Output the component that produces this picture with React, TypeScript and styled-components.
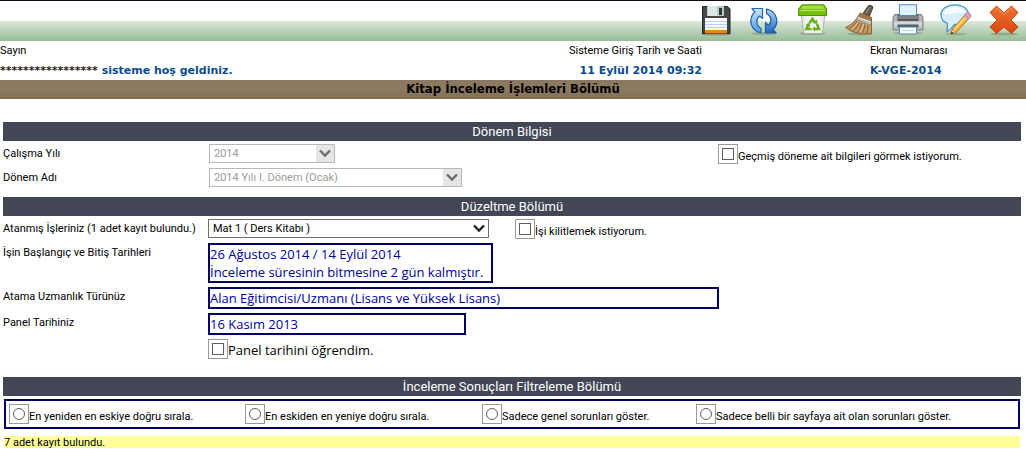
import React from "react";
import styled, { createGlobalStyle, css } from "styled-components";

const GlobalStyle = createGlobalStyle`
  *, *::before { box-sizing: border-box; }
  body {
    margin: 0;
    background: #fff;
    color: #000;
    font-family: Tahoma, Roboto, sans-serif;
    font-size: 11px;
    line-height: 14px;
  }
`;

const Toolbar = styled.nav`
  display: flex;
  justify-content: flex-end;
  gap: 16px;
  height: 41px;
  padding: 3px 6px 0 0;
  border-top: 1px solid #1a0c08;
  background: linear-gradient(#fff 0, #fff 20px, #dbe7db 20px, #97bc97 40px);
`;

const ToolButton = styled.button`
  width: 32px;
  height: 32px;
  padding: 0;
  border: 0;
  background: none;
  cursor: pointer;
  svg { display: block; }
`;

const SessionInfo = styled.header`
  display: grid;
  grid-template-columns: 402fr 300fr 324fr;
  height: 39px;
  padding-top: 3px;
`;

const InfoCell = styled.div<{ $end?: boolean; $indent?: boolean }>`
  display: flex;
  flex-direction: column;
  gap: 6px;
  white-space: nowrap;
  text-align: ${(p) => (p.$end ? "right" : "left")};
  padding-left: ${(p) => (p.$indent ? "168px" : "0")};
`;

const InfoValue = styled.strong`
  font-family: Verdana, "DejaVu Sans", sans-serif;
  color: #0b4c8c;
`;

const Mask = styled.span`
  color: #2a1a10;
`;

const PageTitle = styled.h1`
  margin: 0 0 23px;
  font-family: Tahoma, "DejaVu Sans Condensed", "DejaVu Sans", sans-serif;
  font-stretch: condensed;
  font-size: 13px;
  line-height: 18px;
  padding-bottom: 1px;
  text-align: center;
  background: linear-gradient(#8b7862, #8c7a62 50%, #816e57);
`;

const Section = styled.section<{ $gap: number }>`
  margin: 0 5px ${(p) => p.$gap}px 3px;
`;

const SectionTitle = styled.h2`
  margin: 0 0 3px;
  font-size: 13px;
  font-weight: 400;
  line-height: 19px;
  text-align: center;
  color: #fff;
  background: #424655;
`;

const Row = styled.div<{ $gap: number }>`
  display: flex;
  align-items: flex-start;
  margin-bottom: ${(p) => p.$gap}px;
`;

const rowLabel = css`
  flex: none;
  width: 205px;
  padding-top: 3px;
  white-space: nowrap;
`;

const RowLabel = styled.label`${rowLabel}`;
const RowCaption = styled.span`${rowLabel}`;

const SelectBox = styled.span<{ $width: number; $disabled?: boolean }>`
  position: relative;
  display: block;
  width: ${(p) => p.$width}px;
  margin-left: ${(p) => (p.$disabled ? "1px" : "0")};
  svg {
    position: absolute;
    top: 1px;
    right: 1px;
    pointer-events: none;
    color: ${(p) => (p.$disabled ? "#6d6d6d" : "#222")};
    background: ${(p) => (p.$disabled ? "#e5e5e5" : "#fff")};
  }
`;

const Select = styled.select`
  appearance: none;
  display: block;
  width: 100%;
  height: 19px;
  padding: 0 20px 0 4px;
  border: 1px solid #707070;
  border-radius: 0;
  background: #fff;
  color: #000;
  font: inherit;
  opacity: 1;
  &:disabled {
    border-color: #b8b8b8;
    color: #9c9c9c;
  }
`;

const Option = styled.label<{ $size?: "large" }>`
  display: flex;
  align-items: flex-start;
  height: 20px;
  white-space: nowrap;
  ${(p) =>
    p.$size === "large"
      ? css`
          font-family: "Comic Sans MS", "Open Sans", sans-serif;
          font-size: 13px;
          line-height: 22px;
        `
      : css`
          line-height: 26px;
        `}
`;

const Tick = styled.input`
  appearance: none;
  display: grid;
  place-items: center;
  flex: none;
  width: 20px;
  height: 20px;
  margin: 0;
  border: 1px solid #999;
  background: #fff;
  &::before {
    content: "";
    width: 12px;
    height: 12px;
    border: 1px solid #5f5f5f;
    border-radius: ${(p) => (p.type === "radio" ? "50%" : "0")};
  }
  &:checked::before {
    background: #333;
    box-shadow: inset 0 0 0 2px #fff;
  }
`;

const Aside = styled.div<{ $left: number }>`
  margin-left: ${(p) => p.$left}px;
  height: 19px;
`;

const EndAside = styled.div`
  flex: 0 0 303px;
  height: 19px;
  margin-left: auto;
`;

const ValueBox = styled.output<{ $width: number }>`
  display: block;
  width: ${(p) => p.$width}px;
  border: 2px solid #000066;
  color: #000099;
  font-family: "Comic Sans MS", "Open Sans", sans-serif;
  font-size: 13px;
  line-height: 18px;
  white-space: nowrap;
`;

const Filters = styled.div`
  display: grid;
  grid-template-columns: 236fr 237fr 214fr 322fr;
  margin: 0 1px 7px;
  padding: 3px 0 3px 3px;
  border: 2px solid #000066;
`;

const ResultCount = styled.p`
  margin: 0 1px;
  line-height: 14px;
  height: 12px;
  background: #ffff99;
`;

const Chevron = () => (
  <svg width="18" height="17" viewBox="0 0 18 17" fill="none" aria-hidden="true">
    <path d="M4 5.5 9 10.5 14 5.5" stroke="currentColor" strokeWidth="2.4" />
  </svg>
);

const SaveIcon = () => (
  <svg width="32" height="32" viewBox="0 0 32 32">
    <ellipse cx="16" cy="30" rx="15" ry="1.6" fill="#4d664d" opacity=".45" />
    <path d="M2.500 2.500h25l2.500 2.500v24.500h-27.500z" fill="#474747" stroke="#222" />
    <path d="M7 2h17v10H7z" fill="#b9cbc9" />
    <path d="M8 2h9v10H8z" fill="#dbe8e6" />
    <path d="M19 4h3v7h-3z" fill="#333" />
    <path d="M5 14h22v12H5z" fill="#f7fbff" />
    <path d="M5 17.500h22M5 20.500h22M5 23.500h22" stroke="#b8d2ee" />
    <path d="M5 26h22v3.500H5z" fill="#f08510" />
  </svg>
);

const RefreshIcon = () => (
  <svg width="32" height="32" viewBox="0 0 32 32">
    <defs>
      <linearGradient id="blueA" x1="0" y1="0" x2="0" y2="1">
        <stop offset="0" stopColor="#c9e8fb" />
        <stop offset="1" stopColor="#4f9bdd" />
      </linearGradient>
      <linearGradient id="blueB" x1="0" y1="0" x2="0" y2="1">
        <stop offset="0" stopColor="#b4dcf8" />
        <stop offset="1" stopColor="#1c68bd" />
      </linearGradient>
    </defs>
    <ellipse cx="16" cy="29.500" rx="13" ry="1.600" fill="#4d664d" opacity=".3" />
    <path d="M4 4.500H14.500V14.500L11.500 12C7.500 15.500 8 21.500 13 24.500V29C2.500 26.500-.5 15 7 7.800z" fill="url(#blueA)" stroke="#1f66b4" strokeWidth="1.200" strokeLinejoin="round" />
    <path d="M18.500 5C29 7.500 32 18.500 25 26L28 28.800H17.500V18.500L20.500 21.500C24.500 17.500 23.500 12 18.500 9.500z" fill="url(#blueB)" stroke="#1f5aa5" strokeWidth="1.200" strokeLinejoin="round" />
  </svg>
);

const RecycleIcon = () => (
  <svg width="32" height="32" viewBox="0 0 32 32">
    <ellipse cx="17" cy="29.500" rx="13" ry="1.600" fill="#4d664d" opacity=".35" />
    <path d="M5 10h24l-2.500 19.500H8z" fill="#e6ebe7" stroke="#aab5ab" />
    <path d="M8.500 11h17l-1.500 17H10.500z" fill="#f3f6f3" />
    <path d="M6 .8h22L30.500 5v6.500h-28V5z" fill="#76bd10" stroke="#4e9608" />
    <path d="M7 1.800h20L29 5H4.500z" fill="#a6df45" />
    <path d="M4 6.500h25" stroke="#b9e96c" />
    <g fill="none" stroke="#69ac1b" strokeWidth="2.600">
      <path d="m13.500 19 3-4 2.500 4" />
      <path d="M21 20 23 25h-4.500" />
      <path d="M15.500 25h-5l2-5" />
    </g>
    <path d="m17 19 4.500 1-.5-4.500zM19 22.500v5l-3-2.500zM9.500 21l4-2.500.5 4.500z" fill="#69ac1b" />
  </svg>
);

const BroomIcon = () => (
  <svg width="32" height="32" viewBox="0 0 32 32">
    <ellipse cx="16" cy="30" rx="13" ry="1.500" fill="#4d664d" opacity=".35" />
    <path d="M24.500 1.500Q27 .5 29 3L25.500 12 19 9.500z" fill="#6b5f55" stroke="#43392f" />
    <path d="m25.500 3-4 7" stroke="#a2968a" />
    <path d="M16 9 27.500 13.500 27.500 29.500 17 30 8 27.500 1.500 23.500C8 21 13 15 16 9z" fill="#c49a62" stroke="#8a6234" />
    <path d="M13 17Q8 24 5 25M15.500 18Q12 25 9 27M18 19Q16 26 13.500 28.500M21 20.500Q20 26 18.500 29M24 21.500Q24 27 23 29" fill="none" stroke="#806038" />
    <path d="M14.500 17.500Q11 23 8 25.500M19.500 20Q18 25 16 28" fill="none" stroke="#ebcd96" />
    <path d="M16 9 27.500 13.500 26.500 17 14 12z" fill="#a1753f" />
    <path d="M14 12.500 27 17v4L12.500 15.500z" fill="#e9e7e3" stroke="#8a8178" strokeWidth=".8" />
    <path d="m13.500 14.500 13 4.700" stroke="#999087" strokeWidth=".8" />
  </svg>
);

const PrintIcon = () => (
  <svg width="32" height="32" viewBox="0 0 32 32">
    <ellipse cx="16" cy="29" rx="15" ry="1.500" fill="#4d664d" opacity=".3" />
    <path d="M2.500 10.500h27l1.500 3v12.500H1V13.500z" fill="#b3b6b9" stroke="#7b7f82" />
    <path d="M5.500 10h21v7h-21z" fill="#54585b" />
    <path d="M2 17.500h28v5H2z" fill="#d3d5d7" />
    <path d="M7.500 .7h17v10.800h-17z" fill="#dff1fd" stroke="#4f8dbf" />
    <path d="M6 12h20v3H6z" fill="#7d8184" />
    <path d="M5.500 20.500h21v3h-21z" fill="#55595c" />
    <path d="M7.500 23h17v7h-17z" fill="#f3faff" stroke="#4f8dbf" />
    <path d="M10 26.500h12" stroke="#bcd7ea" />
  </svg>
);

const CommentIcon = () => (
  <svg width="32" height="32" viewBox="0 0 32 32">
    <ellipse cx="16" cy="30" rx="11" ry="1.500" fill="#4d664d" opacity=".25" />
    <path d="M15 .8C6.500.8 1 5.500 1 11c0 4 2.500 7 6.500 8.500L7 27.500c4-2.500 6-4.500 7.500-7C23 20.500 28.500 17 28.500 11S23 .8 15 .8z" fill="#d9effd" stroke="#4d93cc" strokeWidth="1.300" />
    <path d="M4 10C5 5 10 3 15 3s9.500 2.500 10.500 6C18 7 10 12 4 10z" fill="#f5fbff" />
    <path d="m24.500 11.500 4 3.500L16 28.500l-5 1.500 1.500-5z" fill="#f9b33a" stroke="#b9731b" />
    <path d="m26 13-12 13" stroke="#ffdf8a" strokeWidth="1.500" />
    <path d="m12.500 25 3.500 3.500-5 1.500z" fill="#f2d8af" stroke="#a77135" strokeWidth=".7" />
    <path d="m11 30 .7-2.500 1.900 1.700z" fill="#222" />
    <path d="m24.500 11 2-2c2-1.500 5.500 1.500 4 4l-1.700 2z" fill="#ec9fb4" stroke="#b66a83" strokeWidth=".8" />
    <path d="m24 11.500 4.500 4" stroke="#a9b1b9" strokeWidth="1.500" />
  </svg>
);

const CloseIcon = () => (
  <svg width="32" height="32" viewBox="0 0 32 32">
    <defs>
      <linearGradient id="orange" x1="0" y1="0" x2="0" y2="1">
        <stop offset="0" stopColor="#ee7434" />
        <stop offset="1" stopColor="#d9480f" />
      </linearGradient>
    </defs>
    <ellipse cx="16" cy="30" rx="14" ry="1.500" fill="#4d664d" opacity=".35" />
    <path d="M8.500 2 16 9 23.500 2 30 8.500 23 16 30 23 23.500 29.500 16 23 8.500 29.500 2 23 9 16 2 8.500z" fill="url(#orange)" stroke="#c4430f" strokeLinejoin="round" />
    <path d="M8.500 3.500 16 10.500l7.500-7" fill="none" stroke="#f39a68" />
  </svg>
);

const tools = [
  { label: "Kaydet", Icon: SaveIcon },
  { label: "Yenile", Icon: RefreshIcon },
  { label: "Sil", Icon: RecycleIcon },
  { label: "Temizle", Icon: BroomIcon },
  { label: "Yazdır", Icon: PrintIcon },
  { label: "Yorum", Icon: CommentIcon },
  { label: "Kapat", Icon: CloseIcon },
];

const filters = [
  "En yeniden en eskiye doğru sırala.",
  "En eskiden en yeniye doğru sırala.",
  "Sadece genel sorunları göster.",
  "Sadece belli bir sayfaya ait olan sorunları göster.",
];

export default function App() {
  return (
    <>
      <GlobalStyle />
      <Toolbar>
        {tools.map(({ label, Icon }) => (
          <ToolButton key={label} type="button" aria-label={label}>
            <Icon />
          </ToolButton>
        ))}
      </Toolbar>
      <SessionInfo>
        <InfoCell>
          <span>Sayın</span>
          <InfoValue>
            <Mask>*****************</Mask> sisteme hoş geldiniz.
          </InfoValue>
        </InfoCell>
        <InfoCell $end>
          <span>Sisteme Giriş Tarih ve Saati</span>
          <InfoValue>11 Eylül 2014 09:32</InfoValue>
        </InfoCell>
        <InfoCell $indent>
          <span>Ekran Numarası</span>
          <InfoValue>K-VGE-2014</InfoValue>
        </InfoCell>
      </SessionInfo>
      <PageTitle>Kitap İnceleme İşlemleri Bölümü</PageTitle>

      <Section $gap={10}>
        <SectionTitle>Dönem Bilgisi</SectionTitle>
        <Row $gap={5}>
          <RowLabel htmlFor="year">Çalışma Yılı</RowLabel>
          <SelectBox $width={126} $disabled>
            <Select id="year" disabled>
              <option>2014</option>
            </Select>
            <Chevron />
          </SelectBox>
          <EndAside>
            <Option>
              <Tick type="checkbox" />
              Geçmiş döneme ait bilgileri görmek istiyorum.
            </Option>
          </EndAside>
        </Row>
        <Row $gap={0}>
          <RowLabel htmlFor="term">Dönem Adı</RowLabel>
          <SelectBox $width={253} $disabled>
            <Select id="term" disabled>
              <option>2014 Yılı I. Dönem (Ocak)</option>
            </Select>
            <Chevron />
          </SelectBox>
        </Row>
      </Section>

      <Section $gap={18}>
        <SectionTitle>Düzeltme Bölümü</SectionTitle>
        <Row $gap={5}>
          <RowLabel htmlFor="job">Atanmış İşleriniz (1 adet kayıt bulundu.)</RowLabel>
          <SelectBox $width={281}>
            <Select id="job">
              <option>Mat 1 ( Ders Kitabı )</option>
            </Select>
            <Chevron />
          </SelectBox>
          <Aside $left={26}>
            <Option>
              <Tick type="checkbox" />
              İşi kilitlemek istiyorum.
            </Option>
          </Aside>
        </Row>
        <Row $gap={4}>
          <RowCaption>İşin Başlangıç ve Bitiş Tarihleri</RowCaption>
          <ValueBox $width={285}>
            26 Ağustos 2014 / 14 Eylül 2014
            <br />
            İnceleme süresinin bitmesine 2 gün kalmıştır.
          </ValueBox>
        </Row>
        <Row $gap={4}>
          <RowCaption>Atama Uzmanlık Türünüz</RowCaption>
          <ValueBox $width={511}>Alan Eğitimcisi/Uzmanı (Lisans ve Yüksek Lisans)</ValueBox>
        </Row>
        <Row $gap={4}>
          <RowCaption>Panel Tarihiniz</RowCaption>
          <ValueBox $width={258}>16 Kasım 2013</ValueBox>
        </Row>
        <Row $gap={0}>
          <RowCaption />
          <Option $size="large">
            <Tick type="checkbox" />
            Panel tarihini öğrendim.
          </Option>
        </Row>
      </Section>

      <Section $gap={0}>
        <SectionTitle>İnceleme Sonuçları Filtreleme Bölümü</SectionTitle>
        <Filters>
          {filters.map((text) => (
            <Option key={text}>
              <Tick type="radio" name="filter" />
              {text}
            </Option>
          ))}
        </Filters>
        <ResultCount>7 adet kayıt bulundu.</ResultCount>
      </Section>
    </>
  );
}
